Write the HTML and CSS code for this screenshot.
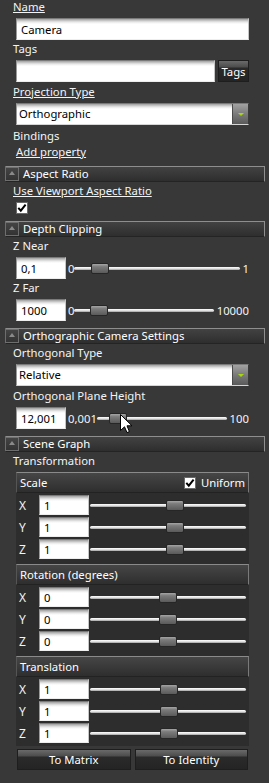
FILE: index.html
```html
<!DOCTYPE html>
<html lang="en">
<head>
  <meta charset="UTF-8">
  <meta name="viewport" content="width=device-width, initial-scale=1.0">
  <title>Camera - Properties</title>
  <link rel="stylesheet" href="styles.css">
</head>
<body>
  <div class="label link first">Name</div>
  <input type="text" class="field" value="Camera">

  <div class="label">Tags</div>
  <div class="tags-row">
    <input type="text" class="field" value="">
    <button class="btn tags-btn">Tags</button>
  </div>

  <div class="label link mt-3">Projection Type</div>
  <div class="combo">
    <span class="combo-text">Orthographic</span>
    <span class="combo-btn"><span class="combo-arrow"></span></span>
  </div>

  <div class="label mt-4">Bindings</div>
  <div class="label link indent">Add property</div>

  <!-- Aspect ratio -->
  <div class="section-head"><span class="collapse"></span>Aspect Ratio</div>
  <div class="label link">Use Viewport Aspect Ratio</div>
  <span class="checkbox big-check">
    <svg width="10" height="10" viewBox="0 0 10 10"><path d="M1.3 4.8 L3.8 7.6 L8.6 1.6" fill="none" stroke="#000" stroke-width="2"/></svg>
  </span>

  <!-- Depth clipping -->
  <div class="section-head"><span class="collapse"></span>Depth Clipping</div>
  <div class="label">Z Near</div>
  <div class="slider-row mt-5">
    <input type="text" class="field small" value="0,1">
    <span class="range-min">0</span>
    <div class="track"><span class="thumb" style="left: 10%"></span></div>
    <span class="range-max">1</span>
  </div>
  <div class="label">Z Far</div>
  <div class="slider-row mt-3">
    <input type="text" class="field small" value="1000">
    <span class="range-min">0</span>
    <div class="track"><span class="thumb" style="left: 11%"></span></div>
    <span class="range-max">10000</span>
  </div>

  <!-- Orthographic camera -->
  <div class="section-head mt-6"><span class="collapse"></span>Orthographic Camera Settings</div>
  <div class="label">Orthogonal Type</div>
  <div class="combo mt-6">
    <span class="combo-text">Relative</span>
    <span class="combo-btn"><span class="combo-arrow"></span></span>
  </div>
  <div class="label mt-3">Orthogonal Plane Height</div>
  <div class="slider-row mt-3">
    <input type="text" class="field small" value="12,001">
    <span class="range-min">0,001</span>
    <div class="track"><span class="thumb" style="left: 9%"></span></div>
    <span class="range-max">100</span>
  </div>

  <!-- Scene graph -->
  <div class="section-head"><span class="collapse"></span>Scene Graph</div>
  <div class="label">Transformation</div>

  <div class="groups">
    <div class="group">
      <div class="group-head">
        <span>Scale</span>
        <span class="uniform">
          <span class="checkbox">
            <svg width="10" height="10" viewBox="0 0 10 10"><path d="M1.3 4.8 L3.8 7.6 L8.6 1.6" fill="none" stroke="#000" stroke-width="2"/></svg>
          </span>
          Uniform
        </span>
      </div>
      <div class="axis-rows">
        <div class="axis-row"><span class="axis">X</span><input type="text" class="field small" value="1"><div class="track"><span class="thumb" style="left: 49%"></span></div></div>
        <div class="axis-row"><span class="axis">Y</span><input type="text" class="field small" value="1"><div class="track"><span class="thumb" style="left: 49%"></span></div></div>
        <div class="axis-row"><span class="axis">Z</span><input type="text" class="field small" value="1"><div class="track"><span class="thumb" style="left: 49%"></span></div></div>
      </div>
    </div>

    <div class="group">
      <div class="group-head"><span>Rotation (degrees)</span></div>
      <div class="axis-rows">
        <div class="axis-row"><span class="axis">X</span><input type="text" class="field small" value="0"><div class="track"><span class="thumb" style="left: 44.5%"></span></div></div>
        <div class="axis-row"><span class="axis">Y</span><input type="text" class="field small" value="0"><div class="track"><span class="thumb" style="left: 44.5%"></span></div></div>
        <div class="axis-row"><span class="axis">Z</span><input type="text" class="field small" value="0"><div class="track"><span class="thumb" style="left: 44.5%"></span></div></div>
      </div>
    </div>

    <div class="group">
      <div class="group-head"><span>Translation</span></div>
      <div class="axis-rows">
        <div class="axis-row"><span class="axis">X</span><input type="text" class="field small" value="1"><div class="track"><span class="thumb" style="left: 45%"></span></div></div>
        <div class="axis-row"><span class="axis">Y</span><input type="text" class="field small" value="1"><div class="track"><span class="thumb" style="left: 45%"></span></div></div>
        <div class="axis-row"><span class="axis">Z</span><input type="text" class="field small" value="1"><div class="track"><span class="thumb" style="left: 45%"></span></div></div>
      </div>
    </div>
  </div>

  <div class="buttons">
    <button class="btn">To Matrix</button>
    <button class="btn">To Identity</button>
  </div>

  <!-- mouse pointer resting on the plane height slider -->
  <svg class="pointer" width="13" height="20" viewBox="0 0 13 20">
    <path d="M0.5 0.5 L0.5 16.5 L4.5 12.8 L7 18.6 L9.4 17.6 L7 11.8 L12 11.8 Z" fill="#fff" stroke="#000" stroke-width="1" stroke-linejoin="miter"/>
  </svg>
</body>
</html>
```

FILE: styles.css
```css
body {
  margin: 0;
  width: 269px;
  height: 783px;
  overflow: hidden;
  position: relative;
  background-color: #383838;
  color: #f4f4f4;
  font-family: "Noto Sans", "Open Sans", sans-serif;
  font-size: 11.3px;
}

/* labels */
.label {
  margin: 2px 0 0 13px;
  height: 14px;
  line-height: 14px;
  white-space: nowrap;
}

.label.first {
  margin-top: 0;
}

.link {
  text-decoration: underline;
}

.indent {
  margin-left: 16px;
}

.mt-3 { margin-top: 3px; }
.mt-4 { margin-top: 4px; }
.mt-5 { margin-top: 5px; }
.mt-6 { margin-top: 6px; }

/* text boxes */
.field {
  display: block;
  box-sizing: border-box;
  width: 233px;
  height: 22px;
  margin: 4px 20px 0 16px;
  padding: 0 4px;
  border: 1px solid;
  border-color: #7a7a7a #c6c6c6 #eeeeee #9a9a9a;
  background: linear-gradient(#a0a0a0, #e8e8e8 3px, #ffffff 5px);
  color: #000;
  font: inherit;
  outline: none;
}

.field.small {
  width: 50px;
  margin: 0;
  flex: none;
}

.tags-row {
  display: flex;
  margin: 4px 20px 0 16px;
}

.tags-row .field {
  flex: 1;
  width: auto;
  margin: 0;
}

/* dark buttons */
.btn {
  box-sizing: border-box;
  height: 21px;
  padding: 0;
  border: 1px solid #1e1e1e;
  background: linear-gradient(#6a6a6a, #4c4c4c 6px, #2a2a2a 7px, #242424);
  color: #fff;
  font: inherit;
  cursor: pointer;
}

.tags-btn {
  width: 31px;
  height: 22px;
  margin-left: 3px;
}

/* combo box */
.combo {
  display: flex;
  box-sizing: border-box;
  height: 22px;
  margin: 4px 20px 0 16px;
  border: 1px solid;
  border-color: #7a7a7a #3a3a3a #d6d6d6 #9a9a9a;
  background: linear-gradient(#a0a0a0, #e8e8e8 3px, #ffffff 5px);
  color: #000;
}

.combo-text {
  flex: 1;
  padding-left: 2px;
  line-height: 20px;
}

.combo-btn {
  width: 15px;
  display: flex;
  align-items: center;
  justify-content: center;
  border-left: 1px solid #4a4a4a;
  background: linear-gradient(#a2a2a2, #7a7a7a 50%, #5a5a5a);
}

.combo-arrow {
  width: 0;
  height: 0;
  border-left: 3px solid transparent;
  border-right: 3px solid transparent;
  border-top: 3px solid #a8d80c;
  margin-top: 1px;
}

/* collapsible section headers */
.section-head {
  display: flex;
  align-items: center;
  gap: 4px;
  box-sizing: border-box;
  height: 16px;
  margin: 7px 4px 0 5px;
  border: 1px solid;
  border-color: #8e8e8e #8e8e8e #242424 #4a4a4a;
  background: linear-gradient(#424242, #2e2e2e);
  color: #fff;
  line-height: 14px;
  white-space: nowrap;
}

.collapse {
  position: relative;
  box-sizing: border-box;
  width: 14px;
  height: 14px;
  margin-left: -1px;
  border: 1px solid #6e6e6e;
  background: linear-gradient(#444, #333);
}

.collapse::after {
  content: "";
  position: absolute;
  left: 3px;
  top: 3px;
  border-left: 3.5px solid transparent;
  border-right: 3.5px solid transparent;
  border-bottom: 4px solid #8a8a8a;
}

/* check boxes */
.checkbox {
  display: inline-flex;
  align-items: center;
  justify-content: center;
  box-sizing: border-box;
  width: 12px;
  height: 12px;
  border: 1px solid #6a6a6a;
  background: #fff;
}

.big-check {
  display: flex;
  margin: 4px 0 0 16px;
}

/* sliders */
.slider-row {
  display: flex;
  align-items: center;
  height: 22px;
  margin: 4px 20px 0 16px;
}

.range-min {
  margin-left: 2px;
}

.range-max {
  margin-left: 3px;
}

.track {
  position: relative;
  flex: 1;
  height: 3px;
  border-radius: 2px;
  background: linear-gradient(#ffffff, #dcdcdc 60%, #9a9a9a);
}

.thumb {
  position: absolute;
  top: -4px;
  box-sizing: border-box;
  width: 18px;
  height: 11px;
  border: 1px solid #262626;
  border-radius: 2px;
  background: linear-gradient(#a6a6a6, #7c7c7c 30%, #5a5a5a);
}

/* transformation groups */
.groups {
  margin: 4px 20px 0 16px;
  padding-bottom: 2px;
  background-color: #2d2d2d;
}

.group + .group {
  margin-top: 4px;
}

.group-head {
  display: flex;
  align-items: center;
  justify-content: space-between;
  box-sizing: border-box;
  height: 21px;
  padding: 0 3px 0 3px;
  border: 1px solid;
  border-color: #8a8a8a #7a7a7a #222 #555;
  background: linear-gradient(#464646, #2e2e2e);
  color: #fff;
}

.uniform {
  display: flex;
  align-items: center;
  gap: 5px;
}

.axis-rows {
  padding-top: 1px;
}

.axis-row {
  display: flex;
  align-items: center;
  height: 22px;
}

.axis-row .field {
  height: 20px;
}

.axis {
  box-sizing: border-box;
  width: 23px;
  padding-left: 3px;
  font-size: 12px;
}

.axis-row .track {
  margin: 0 3px 0 1px;
}

/* bottom buttons */
.buttons {
  display: flex;
  gap: 4px;
  margin: 3px 21px 0 17px;
}

.buttons .btn {
  flex: 1;
}

.pointer {
  position: absolute;
  left: 120px;
  top: 414px;
}
```
